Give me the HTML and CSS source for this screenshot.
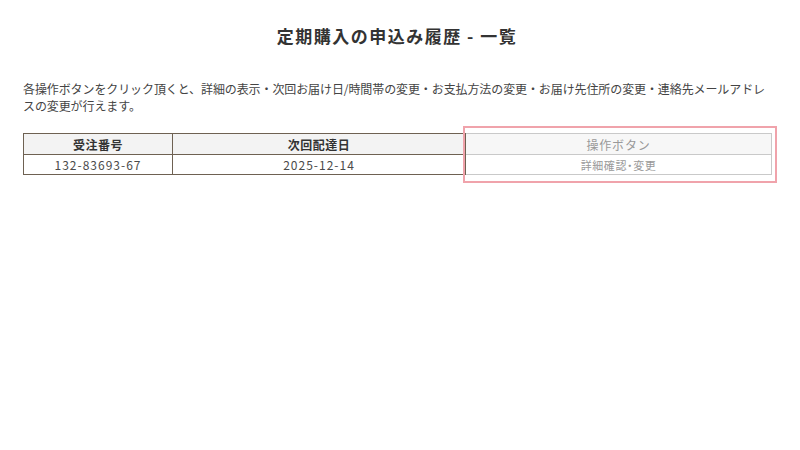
FILE: index.html
```html
<!DOCTYPE html>
<html lang="ja">
<head>
<meta charset="utf-8">
<link rel="stylesheet" href="styles.css">
</head>
<body>
<div class="page">
  <h1 class="title">定期購入の申込み履歴 - 一覧</h1>
  <p class="lead">各操作ボタンをクリック頂くと、詳細の表示・次回お届け日/時間帯の変更・お支払方法の変更・お届け先住所の変更・連絡先メールアドレスの変更が行えます。</p>
  <div class="table-wrap">
    <table class="history">
      <colgroup>
        <col class="c1"><col class="c2"><col class="c3">
      </colgroup>
      <thead>
        <tr><th>受注番号</th><th>次回配達日</th><th class="op">操作ボタン</th></tr>
      </thead>
      <tbody>
        <tr><td class="num">132-83693-67</td><td class="num">2025-12-14</td><td class="op op-link">詳細確認・変更</td></tr>
      </tbody>
    </table>
    <div class="highlight"></div>
  </div>
</div>
</body>
</html>
```

FILE: styles.css
```css
html, body {
  margin: 0;
  padding: 0;
  background: #ffffff;
}
body {
  font-family: "Noto Sans CJK JP", "Noto Sans", sans-serif;
  color: #444;
}
.page {
  width: 748px;
  margin-left: 23px;
  padding-top: 24px;
  padding-bottom: 60px;
}
.title {
  margin: 0;
  text-align: center;
  font-size: 17px;
  font-weight: bold;
  letter-spacing: 1.5px;
  color: #333;
  line-height: 24px;
}
.lead {
  margin: 32px 0 0;
  font-size: 12px;
  line-height: 17px;
  letter-spacing: -0.1px;
  color: #444;
}
.table-wrap {
  position: relative;
  margin-top: 19px;
}
.history {
  width: 748px;
  border-collapse: collapse;
  table-layout: fixed;
  font-size: 12px;
}
.c1 { width: 149px; }
.c2 { width: 293px; }
.c3 { width: 306px; }
.history th, .history td {
  border: 1px solid #6e6152;
  text-align: center;
  padding: 0;
}
.history th {
  height: 20px;
  background: #f3f3f3;
  font-weight: bold;
  color: #333;
  letter-spacing: 0.5px;
}
.history td {
  height: 19px;
  color: #4a4a4a;
}
.history td.num {
  letter-spacing: 1px;
}
.history th.op, .history td.op {
  border-color: #c9c9c9;
  color: #999;
  font-weight: normal;
  letter-spacing: 0.8px;
}
.history th.op {
  background: #f7f7f7;
}
.history td.op-link {
  font-size: 11px;
  letter-spacing: 0.6px;
  font-feature-settings: "palt";
}
.highlight {
  position: absolute;
  left: 440px;
  top: -7px;
  bottom: -8px;
  width: 310px;
  border: 2px solid #f0a3ab;
  pointer-events: none;
}
```
